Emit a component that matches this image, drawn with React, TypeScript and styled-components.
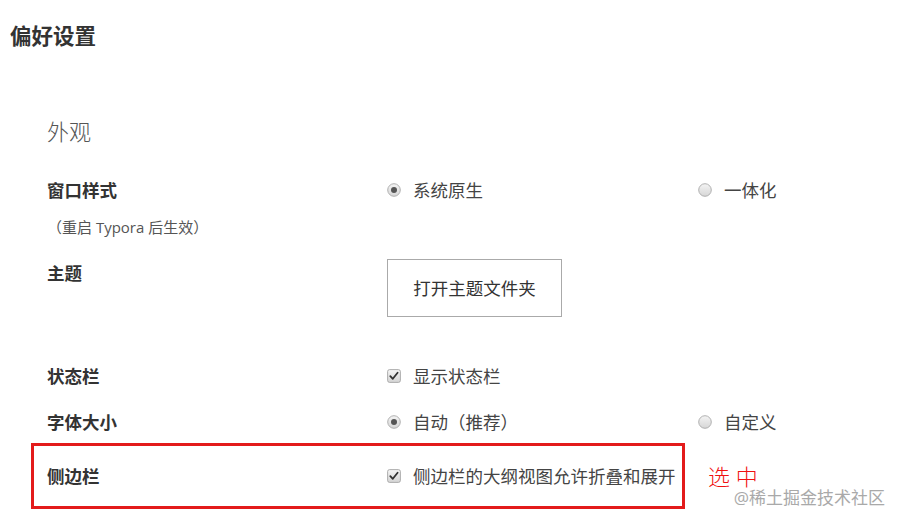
import React from 'react'
import styled, { createGlobalStyle } from 'styled-components'

const GlobalStyle = createGlobalStyle`
    html, body {
        margin: 0;
        padding: 0;
        background: #fff;
    }
    body {
        font-family: 'Open Sans', 'Noto Sans CJK SC', sans-serif;
        color: #333;
    }
`

const Page = styled.div`
    position: relative;
    width: 903px;
    height: 528px;
    overflow: hidden;
    padding-left: 10px;
    box-sizing: border-box;
`

const Title = styled.h1`
    margin: 22px 0 0;
    font-size: 21.5px;
    line-height: 28px;
    font-weight: 700;
    color: #333;
`

const Section = styled.section`
    padding-left: 37px;
`

const Heading = styled.h2`
    margin: 66px 0 0;
    font-size: 22px;
    line-height: 30px;
    font-weight: 300;
    color: #555;
`

const Row = styled.div<{ $gap: number; $top?: boolean }>`
    display: grid;
    grid-template-columns: 340px 311px 200px;
    align-items: ${p => (p.$top ? 'start' : 'center')};
    margin-top: ${p => p.$gap}px;
    line-height: 24px;
`

const Label = styled.div<{ $pad?: number }>`
    font-size: 17.5px;
    font-weight: 700;
    color: #333;
    padding-top: ${p => p.$pad ?? 0}px;
`

const Note = styled.div`
    margin-top: 15px;
    font-size: 15px;
    line-height: 20px;
    color: #555;
`

const Option = styled.label`
    display: flex;
    align-items: center;
    gap: 12px;
    font-size: 17.5px;
    color: #444;
    white-space: nowrap;
`

const Button = styled.div`
    width: 175px;
    height: 58px;
    box-sizing: border-box;
    border: 1px solid #aaa;
    display: flex;
    align-items: center;
    justify-content: center;
    font-size: 17.5px;
    color: #333;
    background: #fff;
`

const Highlight = styled.div`
    position: relative;
    margin: 9px 0 0 -16px;
    width: 654px;
    box-sizing: border-box;
    border: 3px solid #e31b1b;
    padding: 18px 0 18px 13px;
`

const HighlightRow = styled.div`
    display: grid;
    grid-template-columns: 340px 1fr;
    align-items: center;
    line-height: 24px;
`

const Mark = styled.div`
    position: absolute;
    left: calc(100% + 26px);
    top: 16px;
    font-size: 22px;
    line-height: 28px;
    color: #f01010;
    font-weight: 300;
    white-space: nowrap;
`

const Watermark = styled.div`
    position: absolute;
    right: 18px;
    bottom: 20px;
    font-size: 17px;
    line-height: 20px;
    color: #a9a9a9;
    text-shadow: 0 0 2px #fff;
    white-space: nowrap;
`

const Radio = ({ checked }: { checked?: boolean }) => (
    <svg width="14" height="14" viewBox="0 0 14 14">
        <defs>
            <linearGradient id={checked ? 'rg-on' : 'rg-off'} x1="0" y1="0" x2="0" y2="1">
                <stop offset="0" stopColor="#f4f4f4" />
                <stop offset="1" stopColor="#d6d6d6" />
            </linearGradient>
        </defs>
        <circle cx="7" cy="7" r="6.3" fill={`url(#${checked ? 'rg-on' : 'rg-off'})`} stroke="#a9a9a9" strokeWidth="0.9" />
        {checked && <circle cx="7" cy="7" r="3" fill="#555" />}
    </svg>
)

const Check = () => (
    <svg width="14" height="14" viewBox="0 0 14 14">
        <defs>
            <linearGradient id="cg" x1="0" y1="0" x2="0" y2="1">
                <stop offset="0" stopColor="#f6f6f6" />
                <stop offset="1" stopColor="#d4d4d4" />
            </linearGradient>
        </defs>
        <rect x="0.6" y="0.6" width="12.8" height="12.8" rx="2" fill="url(#cg)" stroke="#a5a5a5" strokeWidth="0.9" />
        <path d="M3.3 7.2 L5.8 9.8 L10.6 3.8" fill="none" stroke="#333" strokeWidth="1.8" strokeLinecap="round" strokeLinejoin="round" />
    </svg>
)

export default function App() {
    return (
        <>
            <GlobalStyle />
            <Page>
                <Title>偏好设置</Title>
                <Section>
                    <Heading>外观</Heading>
                    <Row $gap={32}>
                        <Label>窗口样式</Label>
                        <Option>
                            <Radio checked />
                            系统原生
                        </Option>
                        <Option>
                            <Radio />
                            一体化
                        </Option>
                    </Row>
                    <Note>（重启 Typora 后生效）</Note>
                    <Row $gap={22} $top>
                        <Label $pad={2}>主题</Label>
                        <Button>打开主题文件夹</Button>
                    </Row>
                    <Row $gap={47}>
                        <Label>状态栏</Label>
                        <Option>
                            <Check />
                            显示状态栏
                        </Option>
                    </Row>
                    <Row $gap={22}>
                        <Label>字体大小</Label>
                        <Option>
                            <Radio checked />
                            自动（推荐）
                        </Option>
                        <Option>
                            <Radio />
                            自定义
                        </Option>
                    </Row>
                    <Highlight>
                        <HighlightRow>
                            <Label>侧边栏</Label>
                            <Option>
                                <Check />
                                侧边栏的大纲视图允许折叠和展开
                            </Option>
                        </HighlightRow>
                        <Mark>选 中</Mark>
                    </Highlight>
                </Section>
                <Watermark>@稀土掘金技术社区</Watermark>
            </Page>
        </>
    )
}
